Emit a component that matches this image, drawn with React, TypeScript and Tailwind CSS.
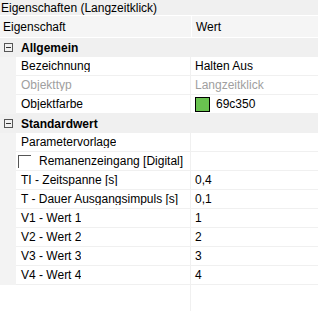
import React from 'react';

type Row =
  | { kind: 'cat'; label: string }
  | { kind: 'prop'; label: string; value?: string; muted?: boolean; color?: string; check?: boolean };

const rows: Row[] = [
  { kind: 'cat', label: 'Allgemein' },
  { kind: 'prop', label: 'Bezeichnung', value: 'Halten Aus' },
  { kind: 'prop', label: 'Objekttyp', value: 'Langzeitklick', muted: true },
  { kind: 'prop', label: 'Objektfarbe', value: '69c350', color: '#69c350' },
  { kind: 'cat', label: 'Standardwert' },
  { kind: 'prop', label: 'Parametervorlage', value: '' },
  { kind: 'prop', label: 'Remanenzeingang [Digital]', check: true },
  { kind: 'prop', label: 'TI - Zeitspanne [s]', value: '0,4' },
  { kind: 'prop', label: 'T - Dauer Ausgangsimpuls [s]', value: '0,1' },
  { kind: 'prop', label: 'V1 - Wert 1', value: '1' },
  { kind: 'prop', label: 'V2 - Wert 2', value: '2' },
  { kind: 'prop', label: 'V3 - Wert 3', value: '3' },
  { kind: 'prop', label: 'V4 - Wert 4', value: '4' },
];

const MinusBox = () => (
  <div className="w-[9px] h-[9px] border border-[#555] flex items-center justify-center">
    <div className="w-[5px] h-px bg-[#333]" />
  </div>
);

const PropRow = ({ row }: { row: Extract<Row, { kind: 'prop' }> }) => {
  const text = row.muted ? 'text-[#a0a0a0]' : 'text-[#000]';
  return (
    <div className={`flex h-[19px] ${text}`}>
      <div className="w-4 bg-[#f3f3f3]" />
      <div className="flex w-[175px] items-center border-r border-b border-[#f0f0f0] bg-white">
        {row.check ? (
          <div className="flex items-center">
            <div className="ml-[2px] mr-[8px] w-[13px] h-[13px] border-t border-l border-[#555]" />
            <span className="whitespace-nowrap">{row.label}</span>
          </div>
        ) : (
          <span className="pl-[5px] whitespace-nowrap overflow-hidden">{row.label}</span>
        )}
      </div>
      <div className="flex flex-1 items-center border-b border-[#f0f0f0] bg-white pl-[4px]">
        {row.color && (
          <div className="mr-[6px] w-[15px] h-[15px] border border-black" style={{ backgroundColor: row.color }} />
        )}
        <span>{row.value}</span>
      </div>
    </div>
  );
};

export default function App() {
  return (
    <div className="flex h-[311px] w-[318px] flex-col bg-white text-[12px] leading-none text-black" style={{ fontFamily: '"Liberation Sans", Arial, sans-serif' }}>
      <div className="flex h-[15px] items-center bg-[#f0f0f0] pl-px">Eigenschaften (Langzeitklick)</div>
      <div className="flex h-[23px] border-t border-b border-white bg-[#f5f5f5]">
        <div className="flex w-[192px] items-center border-r border-white pl-[3px]">Eigenschaft</div>
        <div className="flex flex-1 items-center pl-[4px]">Wert</div>
      </div>
      {rows.map((row) =>
        row.kind === 'cat' ? (
          <div key={row.label} className="flex h-[19px] items-center bg-[#f0f0f0]">
            <div className="flex w-4 justify-center">
              <MinusBox />
            </div>
            <span className="pl-[5px] font-bold">{row.label}</span>
          </div>
        ) : (
          <PropRow key={row.label} row={row} />
        )
      )}
      <div className="flex flex-1">
        <div className="w-[191px] border-r border-[#f0f0f0]" />
      </div>
    </div>
  );
}
